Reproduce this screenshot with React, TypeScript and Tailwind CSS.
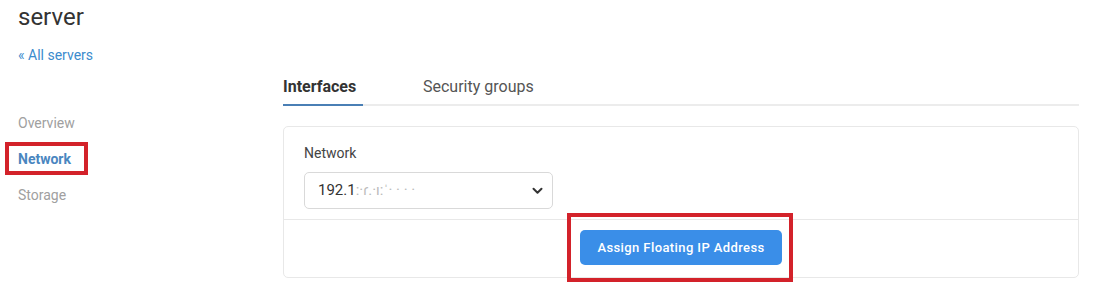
import React from "react";

function Chevron() {
  return (
    <svg width="11" height="8" viewBox="0 0 11 8" fill="none">
      <path d="M1.5 1.8 L5.5 5.8 L9.5 1.8" stroke="#333" strokeWidth="2" strokeLinecap="round" strokeLinejoin="round" />
    </svg>
  );
}

export default function App() {
  return (
    <div className="w-[1093px] h-[302px] bg-white overflow-hidden" style={{ fontFamily: "Roboto, 'Liberation Sans', sans-serif" }}>
      <div className="pl-[18px] pt-[3px]">
        <h1 className="text-[24px] leading-[28px] text-[#333] font-normal">server</h1>
        <a className="block mt-[14px] text-[14px] leading-[20px] text-[#3b8bcd]">« All servers</a>
      </div>
      <div className="flex mt-[8px]">
        <div className="w-[283px] pt-[40px] shrink-0">
          <div className="pl-[18px] text-[14px] leading-[20px] text-[#a0a0a0]">Overview</div>
          <div className="mt-[16px] relative pl-[18px] text-[14px] leading-[20px]">
            <span className="font-bold text-[#4a86bf]">Network</span>
            <div className="absolute left-[5px] top-[-7px] w-[83px] h-[33px] border-[4px] border-[#d3222a]" />
          </div>
          <div className="mt-[16px] pl-[18px] text-[14px] leading-[20px] text-[#a0a0a0]">Storage</div>
        </div>
        <div className="w-[796px] pt-[4px]">
          <div className="flex border-b-2 border-[#ececec] h-[29px]">
            <div className="w-[80px] text-[16px] leading-[20px] font-bold text-[#333] border-b-2 border-[#4a7fb5] mb-[-2px] h-[29px]">Interfaces</div>
            <div className="ml-[60px] text-[16px] leading-[20px] text-[#555]">Security groups</div>
          </div>
          <div className="mt-[20px] border border-[#e8e8e8] rounded-[5px] h-[152px]">
            <div className="px-[20px] pt-[17px] h-[93px] border-b border-[#e8e8e8]">
              <div className="text-[14px] leading-[18px] text-[#444]">Network</div>
              <div className="mt-[10px] w-[249px] h-[37px] border border-[#d9d9d9] rounded-[5px] flex items-center justify-between pl-[13px] pr-[9px]">
                <span className="text-[15px] text-[#333]">
                  192.1<span className="text-[#bbb]">:·ɾ.·ı:ˈ· · ·  ·</span>
                </span>
                <Chevron />
              </div>
            </div>
            <div className="flex justify-center pt-[10px]">
              <div className="relative">
                <button className="w-[202px] h-[35px] rounded-[5px] bg-[#3a8ee8] text-white text-[13px] font-medium tracking-[0.4px]">Assign Floating IP Address</button>
                <div className="absolute left-[-13px] top-[-17px] w-[226px] h-[69px] border-[4px] border-[#d3222a]" />
              </div>
            </div>
          </div>
        </div>
      </div>
    </div>
  );
}
